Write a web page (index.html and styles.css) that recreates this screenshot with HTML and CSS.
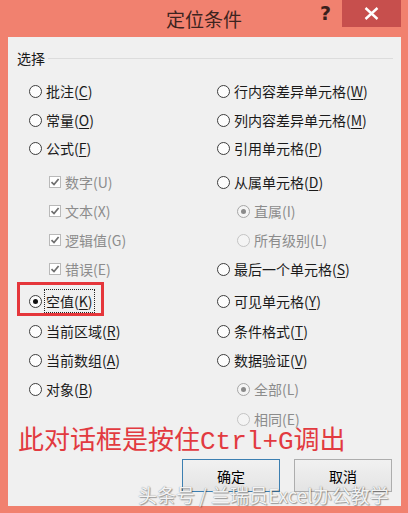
FILE: index.html
```html
<!DOCTYPE html>
<html lang="zh">
 <head>
   <meta charset="UTF-8">
   <title>定位条件</title>
   <link rel="stylesheet" href="styles.css">
 </head>
 <body>
  <div class="window">
    <div class="titlebar">
      <span></span>
      <span class="title">定位条件</span>
      <div class="controls">
        <span class="help">?</span>
        <span class="close">
          <svg width="15" height="13" viewBox="0 0 15 13"><path d="M1.5 1 L13.5 12 M13.5 1 L1.5 12" stroke="#fff" stroke-width="2.4" fill="none"/></svg>
        </span>
      </div>
    </div>

    <div class="panel">
      <div class="group-head"><span>选择</span><i class="rule"></i></div>

      <div class="options">
        <!-- 第1行 -->
        <label class="opt"><span class="radio"></span>批注(<u>C</u>)</label>
        <label class="opt"><span class="radio"></span>行内容差异单元格(<u>W</u>)</label>
        <!-- 第2行 -->
        <label class="opt"><span class="radio"></span>常量(<u>O</u>)</label>
        <label class="opt"><span class="radio"></span>列内容差异单元格(<u>M</u>)</label>
        <!-- 第3行 -->
        <label class="opt"><span class="radio"></span>公式(<u>F</u>)</label>
        <label class="opt"><span class="radio"></span>引用单元格(<u>P</u>)</label>
        <!-- 第4行 -->
        <label class="opt sub off"><span class="check"><svg width="10" height="10" viewBox="0 0 10 10"><path d="M1.5 5.2 L4 7.6 L8.6 2" stroke="#6e6e6e" stroke-width="1.7" fill="none"/></svg></span>数字(U)</label>
        <label class="opt"><span class="radio"></span>从属单元格(<u>D</u>)</label>
        <!-- 第5行 -->
        <label class="opt sub off"><span class="check"><svg width="10" height="10" viewBox="0 0 10 10"><path d="M1.5 5.2 L4 7.6 L8.6 2" stroke="#6e6e6e" stroke-width="1.7" fill="none"/></svg></span>文本(X)</label>
        <label class="opt sub off"><span class="radio on"></span>直属(I)</label>
        <!-- 第6行 -->
        <label class="opt sub off"><span class="check"><svg width="10" height="10" viewBox="0 0 10 10"><path d="M1.5 5.2 L4 7.6 L8.6 2" stroke="#6e6e6e" stroke-width="1.7" fill="none"/></svg></span>逻辑值(G)</label>
        <label class="opt sub off"><span class="radio"></span>所有级别(L)</label>
        <!-- 第7行 -->
        <label class="opt sub off"><span class="check"><svg width="10" height="10" viewBox="0 0 10 10"><path d="M1.5 5.2 L4 7.6 L8.6 2" stroke="#6e6e6e" stroke-width="1.7" fill="none"/></svg></span>错误(E)</label>
        <label class="opt"><span class="radio"></span>最后一个单元格(<u>S</u>)</label>
        <!-- 第8行 -->
        <label class="opt marked"><span class="radio on"></span><span class="focus">空值(<u>K</u>)</span></label>
        <label class="opt"><span class="radio"></span>可见单元格(<u>Y</u>)</label>
        <!-- 第9行 -->
        <label class="opt"><span class="radio"></span>当前区域(<u>R</u>)</label>
        <label class="opt"><span class="radio"></span>条件格式(<u>T</u>)</label>
        <!-- 第10行 -->
        <label class="opt"><span class="radio"></span>当前数组(<u>A</u>)</label>
        <label class="opt"><span class="radio"></span>数据验证(<u>V</u>)</label>
        <!-- 第11行 -->
        <label class="opt"><span class="radio"></span>对象(<u>B</u>)</label>
        <label class="opt sub off"><span class="radio on"></span>全部(L)</label>
        <!-- 第12行 -->
        <span></span>
        <label class="opt sub off"><span class="radio"></span>相同(E)</label>
      </div>

      <p class="note">此对话框是按住Ctrl+G调出</p>

      <div class="buttons">
        <button class="btn default">确定</button>
        <button class="btn">取消</button>
      </div>

      <div class="watermark">头条号 / 兰瑞员Excel办公教学</div>
    </div>
  </div>
 </body>
</html>
```

FILE: styles.css
```css
body{
	margin:0;
	font-family:"Noto Sans CJK SC", sans-serif;
	font-size:14px;
	color:#1a1a1a;
}
.window{
	width:408px;
	height:513px;
	background:#f1816f;
	display:flex;
	flex-direction:column;
}
/* 标题栏 */
.titlebar{
	height:37px;
	display:grid;
	grid-template-columns:1fr auto 1fr;
	align-items:start;
}
.title{
	font-size:19px;
	line-height:37px;
	color:#3d2420;
}
.controls{
	display:flex;
	justify-content:flex-end;
	margin-right:7px;
}
.help{
	font-family:"DejaVu Sans", sans-serif;
	font-weight:bold;
	font-size:19px;
	line-height:27px;
	color:#3a201c;
	margin-right:11px;
}
.close{
	width:59px;
	height:27px;
	background:#c74f4d;
	display:flex;
	align-items:center;
	justify-content:center;
}
/* 主面板 */
.panel{
	flex:1;
	margin:0 7px 7px 8px;
	background:#f0f0f0;
	position:relative;
	padding-top:11px;
}
.group-head{
	display:flex;
	align-items:center;
	height:20px;
	padding:0 8px 0 9px;
	gap:3px;
}
.group-head .rule{
	flex:1;
	border-top:1px solid #dcdcdc;
}
.options{
	margin-top:4px;
	padding-left:21px;
	display:grid;
	grid-template-columns:188px auto;
	grid-template-rows:29px 29px 28px 34px 29px 29px 29px 32px 30px 29px 29px 30px;
}
.opt{
	align-self:end;
	height:20px;
	display:flex;
	align-items:center;
	white-space:nowrap;
}
.opt u{
	text-decoration-thickness:1px;
	text-underline-offset:2px;
}
.opt.sub{
	margin-left:20px;
}
.opt.off{
	color:#8c8c8c;
}
/* 单选框 */
.radio{
	width:13px;
	height:13px;
	box-sizing:border-box;
	border-radius:50%;
	border:1px solid #3d3d3d;
	background:#fdfdfd;
	margin-right:4px;
	display:flex;
	align-items:center;
	justify-content:center;
}
.radio.on::after{
	content:"";
	width:5px;
	height:5px;
	border-radius:50%;
	background:#111;
}
.off .radio{
	border-color:#c4c4c4;
	background:#f4f4f4;
}
.off .radio.on{
	border-color:#a6a6a6;
}
.off .radio.on::after{
	background:#8a8a8a;
}
/* 复选框 */
.check{
	width:12px;
	height:12px;
	box-sizing:border-box;
	border:1px solid #b9b9b9;
	background:#fff;
	margin-right:4px;
	display:flex;
	align-items:center;
	justify-content:center;
}
/* 红框标注 */
.marked{
	position:relative;
	width:fit-content;
}
.marked::after{
	content:"";
	position:absolute;
	top:-9px;
	bottom:-5px;
	left:-12px;
	right:-11px;
	border:3px solid #e5363b;
}
.focus{
	outline:1px dotted #222;
	outline-offset:1px;
}
.note{
	margin:1px 0 0 10px;
	font-family:"Liberation Mono", "Noto Sans CJK SC", monospace;
	font-size:26px;
	line-height:24px;
	color:#e23a40;
}
/* 按钮 */
.buttons{
	display:flex;
	justify-content:flex-end;
	gap:14px;
	margin-top:5px;
	padding-right:9px;
}
.btn{
	width:98px;
	height:33px;
	font-family:inherit;
	font-size:14px;
	color:#000;
	background:linear-gradient(#f1f1f1, #e4e4e4);
	border:1px solid #adadad;
	padding:0;
}
.btn.default{
	border-color:#3c7fb1;
}
/* 水印 */
.watermark{
	position:absolute;
	left:130px;
	top:447px;
	font-size:19px;
	line-height:22px;
	color:rgba(255,255,255,0.92);
	text-shadow:0 0 1px #777, 1px 1px 1px rgba(0,0,0,0.35);
	white-space:nowrap;
}
```
